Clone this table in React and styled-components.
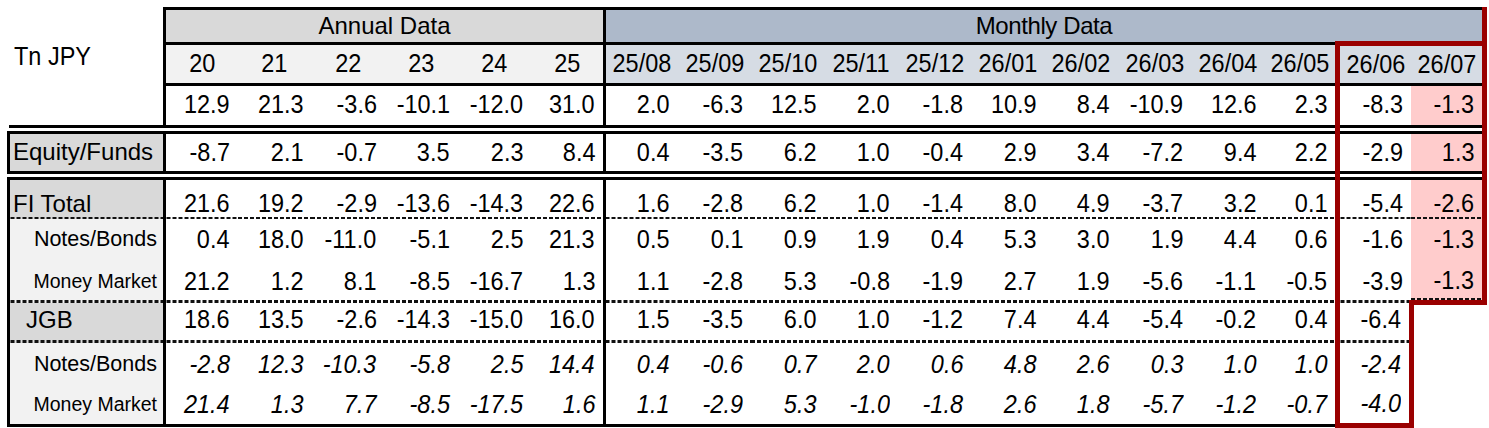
import React from "react";
import styled, { createGlobalStyle, css } from "styled-components";

const GlobalStyle = createGlobalStyle`
  html, body { margin: 0; padding: 0; background: #ffffff; }
  body { font-family: "Liberation Sans", Arial, sans-serif; color: #000; }
`;

const K = "3px solid #000";
const R = "5px solid #9a0000";

const COLORS = {
  gray: "#d9d9d9",
  light: "#f2f2f2",
  blue: "#adb9ca",
  paleBlue: "#d6dce4",
  pink: "#ffcccc",
  none: "transparent",
};

const Page = styled.div`
  padding: 7px 0 0 7px;
`;

const Table = styled.table`
  border-collapse: collapse;
  table-layout: fixed;
  width: 1476px;
  font-family: "Liberation Sans", Arial, sans-serif;
`;

const Col = styled.col`
  width: ${(p) => p.$w}px;
`;

const Row = styled.tr`
  height: ${(p) => p.$h}px;
`;

const borders = css`
  border-top: ${(p) => p.$bt || "none"};
  border-bottom: ${(p) => p.$bb || "none"};
  border-left: ${(p) => p.$bl || "none"};
  border-right: ${(p) => p.$br || "none"};
`;

const dashed = css`
  ${(p) =>
    p.$dash &&
    css`
      background-image: linear-gradient(90deg, #111 0 4px, transparent 4px 6px);
      background-size: 6px 2.5px;
      background-repeat: repeat-x;
      background-position: left bottom;
    `}
`;

/* condensed figure text, like the narrow spreadsheet digits */
const Figure = styled.span`
  display: inline-block;
  font-size: 25.5px;
  line-height: 1;
  transform: scaleX(0.92);
  transform-origin: ${(p) => p.$origin || "right"} center;
`;

const HeadCell = styled.th`
  ${borders};
  background-color: ${(p) => COLORS[p.$tone || "none"]};
  font-weight: normal;
  font-size: 24px;
  line-height: 1;
  text-align: center;
  vertical-align: middle;
  white-space: nowrap;
  padding: 0;
  letter-spacing: ${(p) => p.$ls || 0}px;
`;

const CornerCell = styled.td`
  ${borders};
  font-size: 24px;
  line-height: 1;
  text-align: left;
  vertical-align: middle;
  white-space: nowrap;
  padding: 0 0 14px 5px;
`;

const LabelCell = styled.td`
  ${borders};
  ${dashed};
  background-color: ${(p) => COLORS[p.$tone || "none"]};
  font-size: ${(p) => p.$fs || 24}px;
  line-height: 1;
  text-align: ${(p) => p.$align || "left"};
  vertical-align: middle;
  white-space: nowrap;
  overflow: visible;
  padding: ${(p) => (p.$shift > 0 ? p.$shift * 2 : 0)}px
    ${(p) => (p.$align === "right" ? 6 : 0)}px
    ${(p) => (p.$shift < 0 ? -p.$shift * 2 : 0)}px
    ${(p) => p.$indent || 3}px;
`;

const NumCell = styled.td`
  ${borders};
  ${dashed};
  background-color: ${(p) => (p.$pink ? COLORS.pink : "transparent")};
  font-style: ${(p) => (p.$italic ? "italic" : "normal")};
  line-height: 1;
  text-align: right;
  vertical-align: middle;
  white-space: nowrap;
  padding: ${(p) => (p.$shift > 0 ? p.$shift * 2 : 0)}px 8px
    ${(p) => (p.$shift < 0 ? -p.$shift * 2 : 0)}px 0;
`;

const SpacerCell = styled.td`
  ${borders};
  padding: 0;
`;

const annual = ["20", "21", "22", "23", "24", "25"];
const months = [
  "25/08", "25/09", "25/10", "25/11", "25/12", "26/01",
  "26/02", "26/03", "26/04", "26/05", "26/06", "26/07",
];

const body = [
  {
    key: "total", h: 42, label: "", tone: "none", bb: K,
    vals: ["12.9", "21.3", "-3.6", "-10.1", "-12.0", "31.0", "2.0", "-6.3", "12.5", "2.0", "-1.8", "10.9", "8.4", "-10.9", "12.6", "2.3", "-8.3", "-1.3"],
  },
  { key: "sp1", spacer: true, h: 6.5 },
  {
    key: "eq", h: 39.5, label: "Equity/Funds", tone: "gray", bt: K, bb: K,
    vals: ["-8.7", "2.1", "-0.7", "3.5", "2.3", "8.4", "0.4", "-3.5", "6.2", "1.0", "-0.4", "2.9", "3.4", "-7.2", "9.4", "2.2", "-2.9", "1.3"],
  },
  { key: "sp2", spacer: true, h: 6.5 },
  {
    key: "fi", h: 40.5, label: "FI Total", tone: "gray", bt: K, dash: true, shift: 4,
    vals: ["21.6", "19.2", "-2.9", "-13.6", "-14.3", "22.6", "1.6", "-2.8", "6.2", "1.0", "-1.4", "8.0", "4.9", "-3.7", "3.2", "0.1", "-5.4", "-2.6"],
  },
  {
    key: "nb", h: 41.5, label: "Notes/Bonds", tone: "light", align: "right", fs: 21.5,
    vals: ["0.4", "18.0", "-11.0", "-5.1", "2.5", "21.3", "0.5", "0.1", "0.9", "1.9", "0.4", "5.3", "3.0", "1.9", "4.4", "0.6", "-1.6", "-1.3"],
  },
  {
    key: "mm", h: 42, label: "Money Market", tone: "light", align: "right", fs: 19.5, dash: true, redBottom: true,
    vals: ["21.2", "1.2", "8.1", "-8.5", "-16.7", "1.3", "1.1", "-2.8", "5.3", "-0.8", "-1.9", "2.7", "1.9", "-5.6", "-1.1", "-0.5", "-3.9", "-1.3"],
  },
  {
    key: "jgb", h: 40, label: "JGB", tone: "gray", indent: 16, dash: true, short: true, shift: -3,
    vals: ["18.6", "13.5", "-2.6", "-14.3", "-15.0", "16.0", "1.5", "-3.5", "6.0", "1.0", "-1.2", "7.4", "4.4", "-5.4", "-0.2", "0.4", "-6.4", null],
  },
  {
    key: "nb2", h: 42, label: "Notes/Bonds", tone: "light", align: "right", fs: 21.5, italic: true, short: true, shift: 1,
    vals: ["-2.8", "12.3", "-10.3", "-5.8", "2.5", "14.4", "0.4", "-0.6", "0.7", "2.0", "0.6", "4.8", "2.6", "0.3", "1.0", "1.0", "-2.4", null],
  },
  {
    key: "mm2", h: 41, label: "Money Market", tone: "light", align: "right", fs: 19.5, italic: true, short: true, bb: K, last: true,
    vals: ["21.4", "1.3", "7.7", "-8.5", "-17.5", "1.6", "1.1", "-2.9", "5.3", "-1.0", "-1.8", "2.6", "1.8", "-5.7", "-1.2", "-0.7", "-4.0", null],
  },
];

function numBorders(row, i) {
  const b = { bt: row.bt, bb: row.bb, bl: undefined, br: undefined };
  if (i === 0) b.bl = K;
  if (i === 5) b.br = K;
  if (i === 16) {
    b.bl = R;
    if (row.short) b.br = R;
    if (row.last) b.bb = R;
  }
  if (i === 17) {
    if (row.short) {
      b.bt = undefined;
      b.bb = undefined;
    } else {
      b.br = R;
      if (row.redBottom) b.bb = R;
    }
  }
  return b;
}

function SpacerRow({ h }) {
  const cells = [];
  for (let i = 0; i < 19; i++) {
    cells.push(
      <SpacerCell
        key={i}
        $bl={i === 17 ? R : undefined}
        $br={i === 18 ? R : undefined}
      />
    );
  }
  return <Row $h={h}>{cells}</Row>;
}

function BodyRow({ row }) {
  return (
    <Row $h={row.h}>
      <LabelCell
        $tone={row.tone}
        $bt={row.bt}
        $bb={row.bb}
        $bl={row.key === "total" ? undefined : K}
        $br={K}
        $dash={row.dash}
        $align={row.align}
        $fs={row.fs}
        $indent={row.indent}
        $shift={row.shift}
      >
        {row.label}
      </LabelCell>
      {row.vals.map((v, i) => {
        const b = numBorders(row, i);
        const blank = i === 17 && row.short;
        return (
          <NumCell
            key={i}
            $bt={b.bt}
            $bb={b.bb}
            $bl={b.bl}
            $br={b.br}
            $dash={row.dash && !blank}
            $pink={i === 17 && !row.short}
            $italic={row.italic}
            $shift={row.shift}
          >
            {v !== null && <Figure>{v}</Figure>}
          </NumCell>
        );
      })}
    </Row>
  );
}

export default function App() {
  return (
    <>
      <GlobalStyle />
      <Page>
        <Table>
          <colgroup>
            <Col $w={156} />
            {Array.from({ length: 18 }).map((_, i) => (
              <Col key={i} $w={73.333} />
            ))}
          </colgroup>
          <tbody>
            <Row $h={35}>
              <CornerCell $br={K} />
              <HeadCell colSpan={6} $tone="gray" $bt={K} $bb={K} $bl={K} $br={K}>
                Annual Data
              </HeadCell>
              <HeadCell colSpan={12} $tone="blue" $bt={K} $bb={K} $br={R} $ls={-0.4}>
                Monthly Data
              </HeadCell>
            </Row>
            <Row $h={40.5}>
              <CornerCell $br={K}>
                <Figure $origin="left">Tn JPY</Figure>
              </CornerCell>
              {annual.map((y, i) => (
                <HeadCell
                  key={y}
                  $tone="light"
                  $bb={K}
                  $bl={i === 0 ? K : undefined}
                  $br={i === 5 ? K : undefined}
                >
                  <Figure $origin="center">{y}</Figure>
                </HeadCell>
              ))}
              {months.map((m, i) => (
                <HeadCell
                  key={m}
                  $tone="paleBlue"
                  $bt={i >= 10 ? R : K}
                  $bb={K}
                  $bl={i === 10 ? R : undefined}
                  $br={i === 11 ? R : undefined}
                >
                  <Figure $origin="center">{m}</Figure>
                </HeadCell>
              ))}
            </Row>
            {body.map((row) =>
              row.spacer ? (
                <SpacerRow key={row.key} h={row.h} />
              ) : (
                <BodyRow key={row.key} row={row} />
              )
            )}
          </tbody>
        </Table>
      </Page>
    </>
  );
}
